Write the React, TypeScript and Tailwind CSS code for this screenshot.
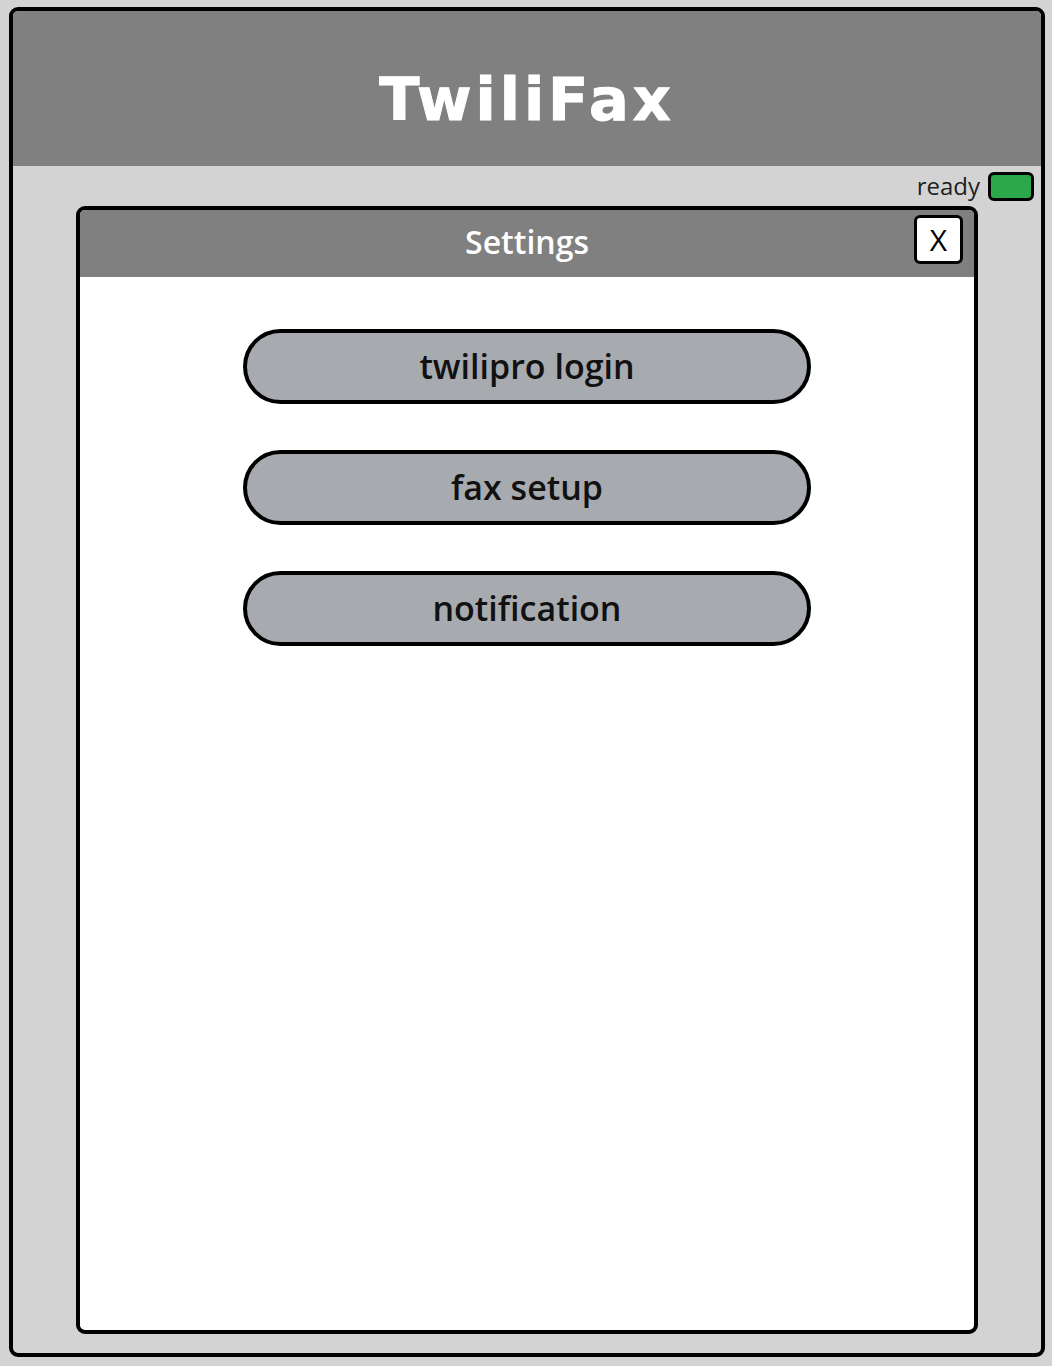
export default function App() {
  const items = ['twilipro login', 'fax setup', 'notification']
  return (
    <div className="min-h-screen bg-[#d3d3d3] pt-[7px] pl-[9px] pr-[7px]">
      <div className="h-[1350px] border-4 border-black rounded-[9px] overflow-hidden bg-[#d3d3d3] flex flex-col">
        <header className="h-[155px] shrink-0 bg-[#808080] flex items-center justify-center">
          <h1 className="text-white font-bold text-[59px] tracking-[4px] font-['DejaVu_Sans',sans-serif] mt-[24px] [-webkit-text-stroke:1px_white]">TwiliFax</h1>
        </header>

        <div className="h-[40px] shrink-0 flex items-center justify-end gap-[8px] pr-[7px]">
          <span className="text-[24px] text-[#1e1e1e] font-['Open_Sans',sans-serif]">ready</span>
          <div className="w-[46px] h-[29px] bg-[#2aa84a] border-[3px] border-black rounded-[6px]" />
        </div>

        <div className="mx-[63px] h-[1128px] border-4 border-black rounded-[9px] overflow-hidden bg-white flex flex-col">
          <div className="h-[67px] shrink-0 bg-[#808080] relative flex items-center justify-center">
            <span className="text-white text-[32px] font-semibold font-['Open_Sans',sans-serif] -mt-[4px]">Settings</span>
            <button className="absolute right-[11px] top-[5px] w-[49px] h-[49px] bg-white border-[3px] border-black rounded-[6px] flex items-center justify-center text-[30px] text-black font-['Open_Sans',sans-serif]">
              X
            </button>
          </div>

          <div className="flex flex-col items-center gap-[46px] pt-[52px]">
            {items.map(label => (
              <button
                key={label}
                className="w-[568px] h-[75px] bg-[#a7abb0] border-4 border-black rounded-full text-[34px] font-semibold text-[#111] font-['Open_Sans',sans-serif] flex items-center justify-center"
              >
                {label}
              </button>
            ))}
          </div>
        </div>
      </div>
    </div>
  )
}
